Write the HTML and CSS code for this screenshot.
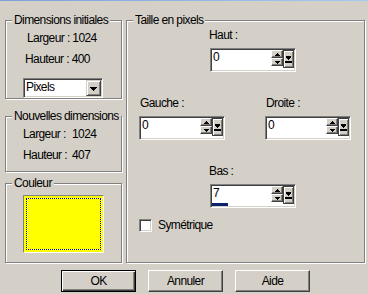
FILE: index.html
```html
<!DOCTYPE html>
<html lang="fr">
<head>
<meta charset="utf-8">
<title>Taille en pixels</title>
<link rel="stylesheet" href="styles.css">
</head>
<body>
<div class="edge"></div>
<div class="main">
  <div class="left">
    <div class="group g1">
      <div class="legend">Dimensions initiales</div>
      <div class="line l1">Largeur : 1024</div>
      <div class="line l2">Hauteur : 400</div>
      <div class="combo">
        <span class="combo-text">Pixels</span>
        <span class="combo-btn"><svg width="7" height="4" viewBox="0 0 7 4" shape-rendering="crispEdges"><rect x="0" y="0" width="7" height="1"/><rect x="1" y="1" width="5" height="1"/><rect x="2" y="2" width="3" height="1"/><rect x="3" y="3" width="1" height="1"/></svg></span>
      </div>
    </div>
    <div class="group g2">
      <div class="legend">Nouvelles dimensions</div>
      <div class="kv">
        <span>Largeur :</span><span>1024</span>
        <span>Hauteur :</span><span>407</span>
      </div>
    </div>
    <div class="group g3">
      <div class="legend">Couleur</div>
      <div class="swatch"><div class="focus"></div></div>
    </div>
  </div>

  <div class="group right">
    <div class="legend">Taille en pixels</div>

    <div class="row r-center">
      <div class="field">
        <div class="flabel lab-haut">Haut :</div>
        <div class="spin-field">
          <div class="ftext"><span class="val">0</span></div>
          <div class="spin">
            <div class="ud">
              <span class="sb"><svg width="5" height="3" viewBox="0 0 5 3" shape-rendering="crispEdges"><rect x="2" y="0" width="1" height="1"/><rect x="1" y="1" width="3" height="1"/><rect x="0" y="2" width="5" height="1"/></svg></span>
              <span class="sb"><svg width="5" height="3" viewBox="0 0 5 3" shape-rendering="crispEdges"><rect x="0" y="0" width="5" height="1"/><rect x="1" y="1" width="3" height="1"/><rect x="2" y="2" width="1" height="1"/></svg></span>
            </div>
            <span class="big"><svg width="7" height="7" viewBox="0 0 7 7" shape-rendering="crispEdges"><rect x="1" y="0" width="5" height="1"/><rect x="1" y="1" width="5" height="1"/><rect x="2" y="2" width="3" height="1"/><rect x="3" y="3" width="1" height="1"/><rect x="0" y="5" width="7" height="2"/></svg></span>
          </div>
        </div>
      </div>
    </div>

    <div class="row r-sides">
      <div class="field">
        <div class="flabel lab-side">Gauche :</div>
        <div class="spin-field">
          <div class="ftext"><span class="val">0</span></div>
          <div class="spin">
            <div class="ud">
              <span class="sb"><svg width="5" height="3" viewBox="0 0 5 3" shape-rendering="crispEdges"><rect x="2" y="0" width="1" height="1"/><rect x="1" y="1" width="3" height="1"/><rect x="0" y="2" width="5" height="1"/></svg></span>
              <span class="sb"><svg width="5" height="3" viewBox="0 0 5 3" shape-rendering="crispEdges"><rect x="0" y="0" width="5" height="1"/><rect x="1" y="1" width="3" height="1"/><rect x="2" y="2" width="1" height="1"/></svg></span>
            </div>
            <span class="big"><svg width="7" height="7" viewBox="0 0 7 7" shape-rendering="crispEdges"><rect x="1" y="0" width="5" height="1"/><rect x="1" y="1" width="5" height="1"/><rect x="2" y="2" width="3" height="1"/><rect x="3" y="3" width="1" height="1"/><rect x="0" y="5" width="7" height="2"/></svg></span>
          </div>
        </div>
      </div>
      <div class="field">
        <div class="flabel lab-side">Droite :</div>
        <div class="spin-field">
          <div class="ftext"><span class="val">0</span></div>
          <div class="spin">
            <div class="ud">
              <span class="sb"><svg width="5" height="3" viewBox="0 0 5 3" shape-rendering="crispEdges"><rect x="2" y="0" width="1" height="1"/><rect x="1" y="1" width="3" height="1"/><rect x="0" y="2" width="5" height="1"/></svg></span>
              <span class="sb"><svg width="5" height="3" viewBox="0 0 5 3" shape-rendering="crispEdges"><rect x="0" y="0" width="5" height="1"/><rect x="1" y="1" width="3" height="1"/><rect x="2" y="2" width="1" height="1"/></svg></span>
            </div>
            <span class="big"><svg width="7" height="7" viewBox="0 0 7 7" shape-rendering="crispEdges"><rect x="1" y="0" width="5" height="1"/><rect x="1" y="1" width="5" height="1"/><rect x="2" y="2" width="3" height="1"/><rect x="3" y="3" width="1" height="1"/><rect x="0" y="5" width="7" height="2"/></svg></span>
          </div>
        </div>
      </div>
    </div>

    <div class="row r-center">
      <div class="field">
        <div class="flabel lab-haut">Bas :</div>
        <div class="spin-field">
          <div class="ftext"><span class="val">7</span><span class="bar"></span></div>
          <div class="spin">
            <div class="ud">
              <span class="sb"><svg width="5" height="3" viewBox="0 0 5 3" shape-rendering="crispEdges"><rect x="2" y="0" width="1" height="1"/><rect x="1" y="1" width="3" height="1"/><rect x="0" y="2" width="5" height="1"/></svg></span>
              <span class="sb"><svg width="5" height="3" viewBox="0 0 5 3" shape-rendering="crispEdges"><rect x="0" y="0" width="5" height="1"/><rect x="1" y="1" width="3" height="1"/><rect x="2" y="2" width="1" height="1"/></svg></span>
            </div>
            <span class="big"><svg width="7" height="7" viewBox="0 0 7 7" shape-rendering="crispEdges"><rect x="1" y="0" width="5" height="1"/><rect x="1" y="1" width="5" height="1"/><rect x="2" y="2" width="3" height="1"/><rect x="3" y="3" width="1" height="1"/><rect x="0" y="5" width="7" height="2"/></svg></span>
          </div>
        </div>
      </div>
    </div>

    <div class="row r-check">
      <span class="checkbox"></span>
      <span>Symétrique</span>
    </div>
  </div>
</div>

<div class="buttons">
  <button class="btn btn-default">OK</button>
  <button class="btn">Annuler</button>
  <button class="btn">Aide</button>
</div>
</body>
</html>
```

FILE: styles.css
```css
* { box-sizing: border-box; }
html, body { margin: 0; padding: 0; }
body {
  width: 368px;
  height: 294px;
  overflow: hidden;
  background: #d4d0c8;
  font-family: "Liberation Sans", Arial, sans-serif;
  font-size: 12px;
  letter-spacing: -0.6px;
  line-height: 15px;
  color: #000;
}
.edge {
  height: 1px;
  background: linear-gradient(to right, #7f9fd8, #a6caf0);
}
.main {
  display: flex;
  align-items: flex-start;
  padding: 19px 0 0 5px;
}
.left {
  width: 117px;
  display: flex;
  flex-direction: column;
}
.group {
  display: flex;
  flex-direction: column;
  align-items: flex-start;
  border: 1px solid #808080;
  box-shadow: 1px 1px 0 #fff, inset 1px 1px 0 #fff;
}
.legend {
  margin: -8px 0 0 6px;
  padding: 0 2px 0 2px;
  height: 15px;
  background: #d4d0c8;
  white-space: nowrap;
}
.g1 { height: 79px; }
.g2 { height: 56px; margin-top: 17px; }
.g3 { height: 80px; margin-top: 11px; }
.right { width: 239px; height: 243px; margin-left: 4px; }

.line { white-space: nowrap; }
.l1 { margin-top: 3px; padding-left: 21px; }
.l2 { margin-top: 6px; padding-left: 19px; }

.combo {
  margin: 11px 0 0 17px;
  width: 80px;
  height: 20px;
  display: flex;
  padding: 1px;
  background: #fff;
  border: 1px solid;
  border-color: #808080 #fff #fff #808080;
  box-shadow: inset 1px 1px 0 #404040, inset -1px -1px 0 #d4d0c8;
}
.combo-text { flex: 1; padding-left: 1px; }
.combo-btn {
  width: 15px;
  height: 16px;
  display: flex;
  align-items: center;
  justify-content: center;
  background: #d4d0c8;
  border: 1px solid;
  border-color: #d4d0c8 #404040 #404040 #d4d0c8;
  box-shadow: inset 1px 1px 0 #fff, inset -1px -1px 0 #808080;
}
.combo-btn svg { display: block; margin-top: 1px; }

.kv {
  margin-top: 3px;
  padding-left: 17px;
  display: grid;
  grid-template-columns: 49px auto;
  row-gap: 6px;
  white-space: nowrap;
}

.swatch {
  margin: 4px 0 0 17px;
  width: 81px;
  height: 58px;
  padding: 2px;
  background: #ffff00;
  border: 1px solid;
  border-color: #808080 #fff #fff #808080;
}
.focus {
  height: 100%;
  border: 1px dotted #0000ff;
}

.row { display: flex; }
.r-center { padding-left: 83px; }
.r-sides { padding-left: 12px; gap: 40px; margin-top: 24px; }
.r-center + .r-sides + .r-center { margin-top: 24px; }
.field { display: flex; flex-direction: column; gap: 5px; }
.flabel { height: 15px; white-space: nowrap; }
.lab-haut { margin-left: -1px; }
.lab-side { margin-left: 1px; }

.spin-field {
  width: 86px;
  height: 24px;
  display: flex;
  padding: 1px;
  background: #fff;
  border: 1px solid;
  border-color: #808080 #fff #fff #808080;
  box-shadow: inset 1px 1px 0 #404040, inset -1px -1px 0 #d4d0c8;
}
.ftext { flex: 1; display: flex; flex-direction: column; }
.val { padding-left: 1px; }
.bar {
  margin-top: auto;
  width: 16px;
  height: 3px;
  background: #0a246a;
}
.spin { display: flex; align-items: flex-start; }
.ud { display: flex; flex-direction: column; }
.sb {
  width: 12px;
  height: 8px;
  display: flex;
  align-items: center;
  justify-content: center;
  background: #d4d0c8;
  border: 1px solid;
  border-color: #fff #404040 #404040 #fff;
  box-shadow: inset -1px -1px 0 #808080;
}
.sb svg { display: block; }
.big {
  width: 11px;
  height: 18px;
  display: flex;
  align-items: center;
  justify-content: center;
  background: #d4d0c8;
  border: 1px solid #404040;
  box-shadow: inset 1px 1px 0 #fff, inset -1px -1px 0 #808080;
}
.big svg { display: block; }

.r-check {
  margin-top: 10px;
  padding-left: 12px;
  align-items: center;
  gap: 6px;
}
.checkbox {
  width: 13px;
  height: 13px;
  background: #fff;
  border: 1px solid;
  border-color: #808080 #fff #fff #808080;
  box-shadow: inset 1px 1px 0 #404040, inset -1px -1px 0 #d4d0c8;
}

.buttons {
  display: flex;
  gap: 12px;
  padding-left: 61px;
  margin-top: 7px;
}
.btn {
  width: 75px;
  height: 22px;
  padding: 0;
  font: inherit;
  letter-spacing: inherit;
  line-height: 20px;
  color: #000;
  text-align: center;
  background: #d4d0c8;
  border: 1px solid;
  border-color: #fff #404040 #404040 #fff;
  box-shadow: inset -1px -1px 0 #808080;
  border-radius: 0;
}
.btn-default {
  border-color: #000;
  box-shadow: inset 1px 1px 0 #fff, inset -1px -1px 0 #404040, inset -2px -2px 0 #808080;
}
```
